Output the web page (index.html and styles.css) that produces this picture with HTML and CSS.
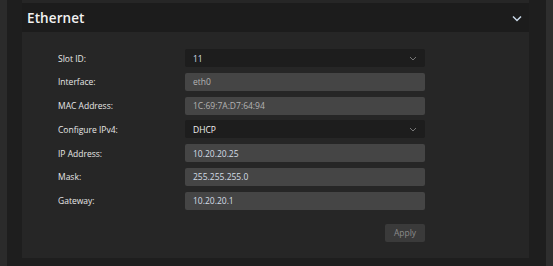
FILE: index.html
```html
<!DOCTYPE html>
<html>
<head>
<meta charset="utf-8">
<link rel="stylesheet" href="styles.css">
</head>
<body>
<div class="app">
  <div class="side-left"></div>
  <main class="main">
    <div class="prev-card"></div>
    <section class="card">
      <header class="card-head">
        <h2 class="title">Ethernet</h2>
        <svg class="chev" width="10" height="7" viewBox="0 0 10 7"><path d="M1 1.5 L5 5.5 L9 1.5" fill="none" stroke="#c9d8e8" stroke-width="1.5"/></svg>
      </header>
      <div class="card-body">
        <div class="row"><label class="lbl">Slot ID:</label><div class="field select"><span class="val bright">11</span><svg class="dd" width="8" height="5" viewBox="0 0 8 5"><path d="M1 1 L4 4 L7 1" fill="none" stroke="#777" stroke-width="1"/></svg></div></div>
        <div class="row"><label class="lbl">Interface:</label><div class="field input"><span class="val dim">eth0</span></div></div>
        <div class="row"><label class="lbl">MAC Address:</label><div class="field input"><span class="val dim">1C:69:7A:D7:64:94</span></div></div>
        <div class="row"><label class="lbl">Configure IPv4:</label><div class="field select"><span class="val white">DHCP</span><svg class="dd" width="8" height="5" viewBox="0 0 8 5"><path d="M1 1 L4 4 L7 1" fill="none" stroke="#777" stroke-width="1"/></svg></div></div>
        <div class="row"><label class="lbl">IP Address:</label><div class="field input"><span class="val bright">10.20.20.25</span></div></div>
        <div class="row"><label class="lbl">Mask:</label><div class="field input"><span class="val bright">255.255.255.0</span></div></div>
        <div class="row"><label class="lbl">Gateway:</label><div class="field input"><span class="val bright">10.20.20.1</span></div></div>
        <div class="actions"><button class="apply">Apply</button></div>
      </div>
    </section>
  </main>
  <div class="side-right"></div>
</div>
</body>
</html>
```
FILE: styles.css
```css
html, body {
  margin: 0;
  padding: 0;
  background: #1e1e1e;
  font-family: "Open Sans", "Noto Sans", sans-serif;
}
.app {
  display: flex;
  width: 553px;
  height: 266px;
  overflow: hidden;
}
.side-left {
  width: 7px;
  background: #2b2b2b;
  flex: none;
}
.side-right {
  width: 7px;
  background: #2e2e2e;
  flex: none;
}
.main {
  flex: 1;
  padding: 0 17px 0 15px;
  display: flex;
  flex-direction: column;
}
.prev-card {
  height: 3px;
  background: #262626;
}
.card {
  display: flex;
  flex-direction: column;
}
.card-head {
  height: 29px;
  background: #1c1c1c;
  display: flex;
  align-items: center;
  justify-content: space-between;
  padding: 0 7px 0 5px;
}
.title {
  margin: 0;
  font-size: 13.5px;
  font-weight: 600;
  color: #f2f2f2;
  letter-spacing: 0.1px;
}
.chev {
  display: block;
  margin-top: 2px;
}
.card-body {
  background: #262626;
  height: 226px;
  box-sizing: border-box;
  padding: 17px 104px 0 36px;
  display: flex;
  flex-direction: column;
  gap: 5.8px;
}
.row {
  display: flex;
  align-items: center;
  height: 18px;
}
.lbl {
  width: 127px;
  font-size: 8.5px;
  font-weight: 500;
  color: #e6e6e6;
}
.field {
  flex: 1;
  height: 18px;
  border-radius: 2px;
  display: flex;
  align-items: center;
  justify-content: space-between;
  padding: 0 8px 0 8px;
  box-sizing: border-box;
}
.select {
  background: #1d1d1d;
}
.input {
  background: #454545;
}
.val {
  font-size: 8.5px;
  font-weight: 500;
}
.dim { color: #b4b4b4; }
.bright { color: #d4dde6; }
.white { color: #f0f0f0; }
.dd { display: block; }
.actions {
  display: flex;
  justify-content: flex-end;
  margin-top: 8px;
}
.apply {
  width: 40px;
  height: 18px;
  background: #3a3a3a;
  border: none;
  border-radius: 2px;
  color: #8a8a8a;
  font-family: inherit;
  font-size: 8.5px;
  padding: 0;
}
```
